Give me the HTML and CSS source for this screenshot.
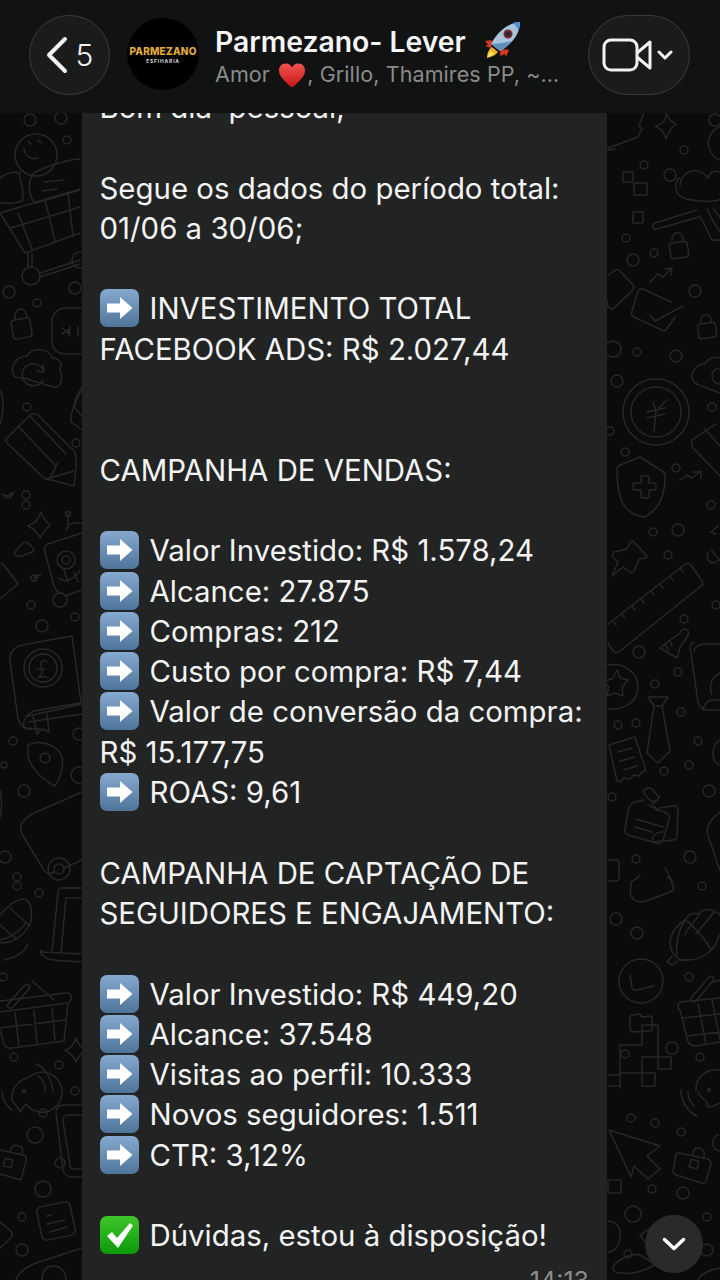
FILE: index.html
```html
<!DOCTYPE html>
<html lang="en">
<head>
  <meta charset="UTF-8">
  <meta name="viewport" content="width=device-width, initial-scale=1.0">
  <title>Parmezano- Lever</title>
  <link rel="stylesheet" href="styles.css">
</head>
<body>
  <svg width="0" height="0" class="defs">
    <defs>
      <linearGradient id="blue" x1="0" y1="0" x2="0" y2="1">
        <stop offset="0" stop-color="#86a9cf"/>
        <stop offset="1" stop-color="#4f7499"/>
      </linearGradient>
      <linearGradient id="green" x1="0" y1="0" x2="0" y2="1">
        <stop offset="0" stop-color="#3fc52a"/>
        <stop offset="1" stop-color="#0c9a0a"/>
      </linearGradient>
      <linearGradient id="red" x1="0" y1="0" x2="0" y2="1">
        <stop offset="0" stop-color="#f0564e"/>
        <stop offset="1" stop-color="#c8141a"/>
      </linearGradient>
      <symbol id="arrow" viewBox="0 0 39 38">
        <rect width="39" height="38" rx="7" fill="url(#blue)"/>
        <path d="M7 14.500h13V8l12.500 11L20 30v-6.500H7z" fill="#fff"/>
      </symbol>
      <symbol id="check" viewBox="0 0 39 38">
        <rect width="39" height="38" rx="7" fill="url(#green)"/>
        <path d="M7 20l5-4 5 6L30 7l3 2.500L18 32z" fill="#fff"/>
      </symbol>
    </defs>
  </svg>

  <div class="phone">
    <!-- doodles of the chat wallpaper -->
    <svg class="wallpaper" width="720" height="1280" viewBox="0 0 720 1280" fill="none" stroke="#272727" stroke-width="1.500" stroke-linecap="round" stroke-linejoin="round">
      <!-- dots, left side -->
      <circle cx="30" cy="120" r="6"/><circle cx="61" cy="118" r="6"/><circle cx="67" cy="140" r="4"/>
      <circle cx="9" cy="292" r="6"/><circle cx="37" cy="303" r="4"/><circle cx="75" cy="288" r="6"/>
      <circle cx="27" cy="407" r="4"/><circle cx="76" cy="443" r="4"/><circle cx="26" cy="495" r="4"/>
      <circle cx="26" cy="505" r="4"/><circle cx="31" cy="605" r="4"/><circle cx="42" cy="626" r="6"/>
      <circle cx="75" cy="617" r="4"/><circle cx="13" cy="741" r="4"/><circle cx="4" cy="765" r="3"/>
      <circle cx="24" cy="791" r="6"/><circle cx="5" cy="857" r="6"/><circle cx="17" cy="877" r="4"/>
      <circle cx="17" cy="886" r="4"/><circle cx="39" cy="893" r="4"/><circle cx="3" cy="977" r="4"/>
      <circle cx="14" cy="1057" r="4"/><circle cx="59" cy="1065" r="4"/><circle cx="75" cy="1091" r="4"/>
      <circle cx="43" cy="1113" r="4"/><circle cx="35" cy="1135" r="8"/><circle cx="43" cy="1189" r="8"/>
      <circle cx="22" cy="1217" r="4"/><circle cx="22" cy="1250" r="6"/>
      <!-- dots, right side -->
      <circle cx="644" cy="165" r="4"/><circle cx="670" cy="175" r="6"/><circle cx="684" cy="150" r="4"/>
      <circle cx="715" cy="120" r="6"/><circle cx="626" cy="238" r="4"/><circle cx="633" cy="260" r="6"/>
      <circle cx="654" cy="253" r="4"/><circle cx="695" cy="291" r="6"/><circle cx="613" cy="349" r="8"/>
      <circle cx="637" cy="352" r="4"/><circle cx="676" cy="356" r="6"/><circle cx="617" cy="381" r="6"/>
      <circle cx="712" cy="407" r="4"/><circle cx="625" cy="452" r="4"/><circle cx="676" cy="468" r="4"/>
      <circle cx="610" cy="431" r="4"/><circle cx="653" cy="532" r="4"/><circle cx="678" cy="530" r="6"/>
      <circle cx="668" cy="555" r="4"/><circle cx="711" cy="505" r="4"/><circle cx="684" cy="619" r="4"/>
      <circle cx="639" cy="652" r="6"/><circle cx="678" cy="672" r="4"/><circle cx="655" cy="684" r="4"/>
      <circle cx="681" cy="712" r="4"/><circle cx="618" cy="725" r="4"/><circle cx="636" cy="723" r="4"/>
      <circle cx="698" cy="741" r="4"/><circle cx="689" cy="765" r="4"/><circle cx="664" cy="771" r="4"/>
      <circle cx="612" cy="797" r="4"/><circle cx="709" cy="791" r="6"/><circle cx="636" cy="859" r="4"/>
      <circle cx="690" cy="857" r="6"/><circle cx="702" cy="886" r="4"/><circle cx="716" cy="605" r="4"/>
      <circle cx="616" cy="919" r="6"/><circle cx="637" cy="933" r="6"/><circle cx="689" cy="977" r="4"/>
      <circle cx="672" cy="1048" r="6"/><circle cx="625" cy="1054" r="4"/><circle cx="700" cy="1057" r="4"/>
      <circle cx="631" cy="1118" r="4"/><circle cx="655" cy="1123" r="4"/><circle cx="681" cy="1132" r="4"/>
      <circle cx="652" cy="1189" r="4"/><circle cx="683" cy="1193" r="6"/><circle cx="633" cy="1214" r="8"/>
      <circle cx="707" cy="1217" r="4"/><circle cx="628" cy="1254" r="4"/><circle cx="707" cy="1250" r="6"/>

      <!-- shopping cart + smile + heart, top left -->
      <circle cx="36" cy="155" r="21"/>
      <path d="M24 149c1 8 9 11 14 9M28 141l3 3M38 140l3 3"/>
      <path d="M0 203c8 0 12 2 22-2 4-12-4-22-2-28-6-2-14 0-20 5"/>
      <path d="M34 173c10-6 34-14 46-14M34 173c-7 8-6 24 2 30M80 190l-44 13"/>
      <path d="M44 182l20-2M42 191l15-2"/>
      <path d="M0 213l80-24M0 213l25 40 55-20M11 228l69-21M18 213l14 36M45 200l10 41M68 193l5 43"/>
      <path d="M28 253v14M32 253v14"/><circle cx="31" cy="276" r="9"/><path d="M40 273l40-13M40 277l40-13"/><circle cx="80" cy="260" r="8"/>
      <!-- lock and bubble -->
      <rect x="12" y="319" width="19" height="19" rx="3" transform="rotate(-10 21 328)"/><path d="M15 319c-1-13 11-13 12-2"/>
      <path d="M82 308H66c-8 0-14 6-14 14v20c0 7 6 12 14 12h16"/><path d="M62 328l8 6M70 326l-1 10M62 334l8-5M78 326v10"/>
      <!-- cloud -->
      <path d="M14 376c-5-10 3-20 13-20 5-9 22-8 25 2 10 0 10 8 8 12 3 8 2 18-7 17l-26-8c-6-1-11-1-13-3z"/><path d="M44 372a11 11 0 1 0-1 8M43 365l1 7-7-1"/>
      <path d="M82 386l-7 14 0 8 7 8"/>
      <!-- pencil -->
      <path d="M8 437l21-21c3-3 7-3 10 0l36 36c2 6 1 20-1 34l-30-8-36-34c-3-3-3-5 0-7z"/><path d="M18 426l38 40M30 416l36 38M46 479l28-8M58 462c-4 8-6 14-10 18"/>
      <path d="M0 390c4 8 4 22 0 34"/><path d="M82 390c-6 10-12 22-11 32l11 8"/>
      <path d="M2 494l8 4 4-6M4 498l10-6"/>
      <!-- star and triangle -->
      <path d="M41 512c-3 8-6 11-13 14 6 3 10 7 12 12 3-6 6-9 10-13-4-3-7-7-9-13z"/>
      <path d="M22 542c2-3 4-2 6-1l5 5c1 2 1 3-1 4l-10 4c-6 1-8-1-7-4z" transform="translate(0 2)"/>
      <path d="M0 563l4 2 14 19-18 15"/>
      <!-- robot -->
      <path d="M82 533l-34 11c-4 2-4 4-3 8l9 34c2 5 5 8 9 8h0M82 590l-17 6"/>
      <path d="M66 530c2-6 6-8 16-7M68 514v14"/><circle cx="68" cy="514" r="2.500"/>
      <circle cx="66" cy="560" r="9"/><circle cx="66" cy="560" r="4"/><circle cx="60" cy="600" r="7"/>
      <path d="M34 578l7-4M58 578c8 6 18 0 22-8M64 570l4 12M74 572l4 10"/><circle cx="34" cy="578" r="3"/>
      <!-- book with pound coin -->
      <path d="M72 636l-50 9c-8 2-13 8-12 16l8 58c3 8 7 11 14 10h8M72 636l9 66M80 703l-46 8c-6 2-12 10-10 15 1 2 3 3 7 2M28 716l54-12M28 722l54-8"/>
      <circle cx="43" cy="668" r="19"/><circle cx="43" cy="668" r="14"/><path d="M47 662c-3-3-7-1-6 3l1 8c-1 3-2 4-4 4h9M37 669h8"/>
      <path d="M33 716l4 18 5-5 7 3-2-18"/>
      <!-- map pin -->
      <path d="M28 745c12-6 30 0 34 12 2 10-2 22-7 29-12-6-25-18-27-30z"/><circle cx="45" cy="758" r="5"/>
      <path d="M0 790c3 12 1 24-1 32"/>
      <circle cx="79" cy="734" r="6"/><circle cx="79" cy="775" r="8"/>
      <!-- big tag -->
      <path d="M82 792l-50 22c-10 6-14 12-10 20l22 36c2 4 6 4 10 2M64 868l18-8"/>
      <circle cx="59" cy="869" r="11"/><circle cx="59" cy="869" r="5"/>
      <!-- corn, laptop -->
      <path d="M0 915c6-8 16-16 24-16 8 2 8 12 7 22-4 10-12 18-22 21-6 1-9 1-9 0M0 925l16 14M10 908l20 18M0 940c10-2 22-10 26-18M4 960c10-2 20-6 24-16"/>
      <path d="M82 888H62c-3 0-4 2-4 4l-6 60M82 898H66l-5 54M42 950c-2 0-2 4 0 5l6 4c10 2 22 2 34 3M42 952l40 2"/>
      <!-- basket -->
      <path d="M8 1004l16-18c4-3 7 0 5 3l-16 18c-3 3-7 0-5-3zM32 981l22 19"/>
      <path d="M0 1001l66-8c6-1 7 8 2 10L0 1012M68 1003l-4 38-52 7c-6 1-8-2-9-8l-3-10M0 1028l65-8M15 1013l4 33M34 1011l3 32M52 1008l3 32"/>
      <!-- star -->
      <path d="M76 1038c-2 8-6 11-11 12 5 3 9 6 11 12 2-5 5-9 10-12-5-2-8-6-10-12z"/>
      <!-- ringing bubble -->
      <path d="M24 1102a20 20 0 1 0 2-26 20 20 0 0 0-16 22c1 4 6 5 8 12z" transform="translate(2 2)"/><circle cx="24" cy="1091" r="1.500"/>
      <path d="M36 1064c10 4 16 16 17 28M38 1076c5 3 8 9 7 15M2 1092c1 8 4 14 10 18"/>
      <!-- briefcase -->
      <path d="M0 1150l23 5c3 1 4 3 3 6l-5 19-21-6M10 1152c1-6 4-8 9-6 4 1 4 4 3 9"/>
      <rect x="4" y="1159" width="8" height="8" transform="rotate(12 8 1163)"/>
      <!-- note -->
      <rect x="39" y="1204" width="34" height="34" rx="5" transform="rotate(-12 56 1221)"/><path d="M47 1216l4-1M47 1224l18-4M50 1232l17-5"/>
      <path d="M0 1222l10 8c3 3 3 6 0 9l-10 9"/>
      <path d="M82 1248l-46 15c-10 4-18 10-20 17M42 1280c0-8 4-14 11-14 8 0 13 6 13 14"/>
      <!-- laptop frame -->
      <path d="M82 1105H64c-6 0-8 4-8 8l7 56c1 6 4 8 10 8h9M82 1115H68c-4 0-5 3-5 6l7 44c0 3 1 4 4 4h8"/><circle cx="60" cy="1163" r="5"/>

      <!-- right side: squares, star -->
      <rect x="623" y="172" width="10" height="10"/><rect x="634" y="183" width="13" height="12"/><rect x="633" y="212" width="10" height="11"/>
      <path d="M666 113c0 8-3 11-11 13 6 2 9 6 11 13 2-7 5-11 10-15-5-2-8-6-10-11z"/>
      <path d="M608 148l30-11 4-8-3-3 5-14M608 150c3 0 4 0 7-1"/>
      <!-- lollipop pill -->
      <path d="M697 210l-42 13c-4 2-2 7 2 6l42-12"/>
      <path d="M680 178c-6 1-4 14-3 14 2 7 15 8 23 9s18 0 20-2M720 172c-6-2-10 0-12 6-10-14-28-6-28 8"/>
      <path d="M708 142a23 23 0 0 1 12-16M720 160c-8-2-12-12-12-18"/>
      <path d="M707 209l6 12 7 11M713 209l7 8M700 216l12 24M712 240h8"/>
      <!-- locks -->
      <rect x="670" y="242" width="18" height="16" rx="3" transform="rotate(-8 679 250)"/><path d="M672 240c-1-8 9-10 11-2l0 4"/>
      <rect x="698" y="323" width="18" height="15" rx="3" transform="rotate(-8 707 330)"/><path d="M701 322c-1-8 8-10 10-3l0 3"/>
      <path d="M650 282l8-8 5 3 9-9M665 269l7-1-1 7"/>
      <path d="M608 275l6-4c2-2 4-2 6 0l13 14c1 1 1 3 0 5l-20 19-5-2-1-6"/>
      <!-- checked envelope -->
      <path d="M671 302l-28-13c-3-1-4 0-5 2l-6 20c-1 3 0 5 2 6l28 13c3 1 5 0 6-3l7-10"/><path d="M650 315l5 6 28-15"/>
      <!-- heart, cloud, right edge -->
      <path d="M720 358c-6-2-12 0-15 6-5-1-13 5-13 12-1 4 4 9 10 10l18 7"/><circle cx="720" cy="376" r="8"/>
      <!-- yen coin -->
      <circle cx="656" cy="412" r="33"/><circle cx="656" cy="412" r="25"/><path d="M653 402l3 9 11-11M656 411l-2 20M647 412l18-4M647 418l18-4"/>
      <path d="M692 440l24-16M692 440c-1 4 0 6 1 8l27 28M704 428l16 18"/>
      <!-- shield with cross -->
      <path d="M640 457l-20 8c-2 1-3 2-3 5 0 12 2 26 6 34 5 8 13 12 22 13 10-6 20-15 20-40 0-3-1-5-3-6z"/><path d="M641 476h6c1 0 2 1 2 2v5h5c2 0 2 2 2 3v2c0 1-1 2-2 2h-5v6c0 1-1 2-2 2h-4c-1 0-2-1-2-2v-6h-6c-1 0-2-1-2-2v-2c0-2 1-3 2-3h6v-5c0-1 0-2 0-2z"/>
      <path d="M680 480l7-5 5 3 9-7M693 472h8v7"/>
      <!-- pin -->
      <path d="M633 541l13 14c1 1 1 2 0 3l-7 1-5 12c-1 2-3 2-4 1l-7-5-11 9 6-14-5-5c-1-2 0-4 1-5l13-3 3-6c1-1 2-2 3-2z"/>
      <path d="M718 526l-7 6 5 2"/><path d="M708 552c-2 6 0 10 5 11l7-3-9-10"/>
      <!-- ruler -->
      <path d="M608 624l76-59c3-2 5-2 7 0l11 16c1 2 1 4-1 5l-81 65c-3 2-5 2-7 0l-5-8"/>
      <path d="M613 621l3 4M622 614l3 4M632 606l3 4M641 599l3 4M651 591l3 4M660 584l3 4M670 576l3 4M680 568l3 4"/>
      <!-- eraser pen -->
      <path d="M679 634c2-5 6-6 8-4 2 1 2 4 0 7l-7 10-3 11-17-10 10-8zM665 644l3 6M670 640l2 6"/>
      <!-- star in circle -->
      <path d="M608 665c16-3 30 8 30 22s-14 24-30 22"/><path d="M622 670l3 8 8 2-6 7 1 9-8-3-8 3 2-9-6-6 9-2z" transform="translate(-5 0)"/>
      <!-- tie -->
      <path d="M648 697h20l-6 9 8 45-12 12-11-10 7-47z"/><path d="M654 706h8"/>
      <!-- receipt -->
      <path d="M608 745l26-8 11 34-4 1-3 4-5-1-4 4-6-1-4 4-3-1z" transform="translate(1 0)"/><path d="M618 752l14-4M620 761l15-4M623 770l14-4"/>
      <!-- pinned notes -->
      <path d="M650 800c-3-3-6-6-6-8 0-4 5-5 8-3l6 7c1 3-1 6-6 5zM654 806l3 5M660 796c-2 4-4 6-8 8"/>
      <path d="M644 800l-9 2c-3 1-5 3-6 6l-4 20c-1 3 0 5 3 7l28 8c3 1 6 0 7-3l6-20c1-3 0-6-3-7l-18-8"/>
      <path d="M660 808l13-2c3-1 5 1 5 4l-1 26c0 3-2 4-4 4l-21 2M636 819l27 8M635 827l17 5M652 842c0-6 4-10 11-10"/>
      <!-- frame at edge -->
      <path d="M608 860h8c2 0 3 1 3 3v14c0 3-1 4-3 4h-8"/>
      <path d="M720 812c-6 4-13 12-13 20l10 30 3 8"/><path d="M720 673c-8 4-12 12-8 22"/><path d="M694 643c-3 0-4 2-4 4l8 55c2 6 4 8 8 8h14M720 644h-16c-6 0-10 4-10 8"/><path d="M720 700h-8c-4 0-9 6-9 10"/>
      <path d="M720 740c-4 2-7 8-7 14s3 10 7 11"/>
      <!-- camera bag -->
      <path d="M640 875l-3 3c-3 3-7 3-6 6l-1 10 4 6c4 3 8 2 12 1l24-9c3-1 5-3 3-6l-2-6-4-3"/><path d="M665 868l8 15"/>
      <!-- corn -->
      <path d="M680 960c-6-4-10-10-10-18 1-10 8-18 15-22 3-5 8-8 14-6 3-5 12-6 16-2 4 0 8 6 6 10 2 4 0 12-3 16-2 10-14 22-30 22zM672 956l-5 6 5 3 6-4"/><path d="M685 920c-6 10-10 22-8 36M685 920c10 6 22 22 26 30M700 913c-4 8-14 16-15 22M714 912c-4 6-12 14-18 22"/>
      <!-- clock -->
      <circle cx="641" cy="981" r="22"/><path d="M630 974l2 14c1 2 3 3 5 2l17-4"/>
      <!-- folder -->
      <path d="M632 1015l8-1 2 3 8-1c1 0 2 1 2 3v10c0 2-1 2-3 2l-16 1c-2 0-3-1-3-3v-12c0-1 1-2 2-2z"/>
      <!-- basket, right -->
      <path d="M691 998l18-21c3-2 6 1 4 4l-17 20c-3 2-7-1-5-3zM720 980l-6 2"/>
      <path d="M680 1002l40-4M680 1002c-3 3-3 6 0 8l8 32c2 3 5 4 8 4l24-4M683 1018l37-4M688 1036l32-4M698 1004l8 40M712 1000l8 40"/>
      <!-- ringing bubble right -->
      <path d="M696 1090c-1-12 10-22 24-20M698 1092c2 4 4 7 8 9l2 6c4 0 8-2 12-4"/><circle cx="709" cy="1090" r="1.500"/>
      <path d="M681 1090c0 10 6 22 16 26M688 1092c0 6 2 10 6 14"/>
      <!-- pixel steps -->
      <path d="M608 1075h12v-30h22v-20h16v32h13v12h-13v-12h-16v16h13v13h-13v-13h-22v13h-12M620 1088v-13"/>
      <!-- cursor -->
      <path d="M609 1130l51 16-13 10 13 13-12 10-14-13-3 11z"/>
      <!-- briefcase right -->
      <path d="M679 1153l29 6c2 1 3 3 3 5l-5 17c-1 2-2 3-4 2l-26-8c-2-1-3-2-3-4l3-16c0-2 1-2 3-2zM693 1155c0-6 3-8 6-7 4 1 6 4 5 9"/>
      <rect x="690" y="1160" width="8" height="8" transform="rotate(14 694 1164)"/>
      <path d="M718 1135c-3 1-5 4-5 8 0 6 3 7 7 8"/>
      <rect x="608" y="1180" width="13" height="13"/>
      <path d="M608 1221c10 1 13 8 12 16-1 10-6 15-12 15"/>
      <!-- plane, under the scroll button -->
      <path d="M640 1235l22-14c3-4 8-6 14-5l16 10M640 1235l26 36-26-16c-10-2-20 4-26 10-3 6 1 8 8 8 12 2 26-4 36-10l12 4 4-8"/>
      <path d="M720 1268c-10 2-20 6-22 12"/>
    </svg>

    <header class="topbar">
      <button class="round-btn back-btn">
        <svg width="22" height="38" viewBox="0 0 22 38" fill="none" stroke="#f2f2f2" stroke-width="4" stroke-linecap="round" stroke-linejoin="round"><path d="M19 3L3 19l16 16"/></svg>
        <span class="back-count">5</span>
      </button>
      <div class="avatar">
        <span class="logo-name">PARMEZANO</span>
        <span class="logo-sub">ESFIHARIA</span>
      </div>
      <div class="chat-title">
        <div class="title-row">
          <span>Parmezano- Lever</span>
          <svg class="rocket" width="38" height="38" viewBox="0 0 38 38">
            <path d="M9 19L2 20l3 4-3 1 6 2zM18 28l-1 7 5-2 1 3 3-7z" fill="#d8391f"/>
            <path d="M9 26c-3 2-5 6-5 11 5-1 9-3 11-6z" fill="#f6b21b"/>
            <path d="M7 30c-1 2-2 4-2 6 3-1 5-2 6-4z" fill="#fbe36a"/>
            <path d="M8 23C14 11 25 2 37 1c0 12-8 22-20 29z" fill="#a9c4dc"/>
            <path d="M8 23l9 7c5-3 9-6 12-10-7 2-14 3-21 3z" fill="#5f8fc0"/>
            <path d="M30 1.500c2 0 5-.5 7-.5 0 3-.5 6-1.500 8z" fill="#4f93d8"/>
            <circle cx="25" cy="13" r="4.500" fill="#7a2a2c"/>
            <circle cx="25" cy="13" r="2.500" fill="#2c2a38"/>
          </svg>
        </div>
        <div class="members">Amor <svg class="heart" width="27" height="25" viewBox="0 0 27 25"><path d="M13.500 25C5 18 0 13 0 7c0-4 3-7 7-7 3 0 5 1.500 6.500 4C15 1.500 17 0 20 0c4 0 7 3 7 7 0 6-5 11-13.500 18z" fill="url(#red)"/></svg>, Grillo, Thamires PP, ~...</div>
      </div>
      <button class="round-btn video-btn">
        <svg width="50" height="34" viewBox="0 0 50 34" fill="none" stroke="#f2f2f2" stroke-width="3" stroke-linejoin="round"><rect x="2" y="2" width="33" height="30" rx="7"/><path d="M35 15l13-11v26L35 19"/></svg>
        <svg width="16" height="10" viewBox="0 0 16 10" fill="none" stroke="#f2f2f2" stroke-width="3" stroke-linecap="round" stroke-linejoin="round"><path d="M2 2l6 6 6-6"/></svg>
      </button>
    </header>

    <main class="chat">
      <div class="bubble">
        <div class="line">Bom dia  pessoal,</div>
        <div class="line"></div>
        <div class="line">Segue os dados do período total:</div>
        <div class="line">01/06 a 30/06;</div>
        <div class="line"></div>
        <div class="line"><svg class="emoji"><use href="#arrow"/></svg>INVESTIMENTO TOTAL</div>
        <div class="line">FACEBOOK ADS: R$ 2.027,44</div>
        <div class="line"></div>
        <div class="line"></div>
        <div class="line">CAMPANHA DE VENDAS:</div>
        <div class="line"></div>
        <div class="line"><svg class="emoji"><use href="#arrow"/></svg>Valor Investido: R$ 1.578,24</div>
        <div class="line"><svg class="emoji"><use href="#arrow"/></svg>Alcance: 27.875</div>
        <div class="line"><svg class="emoji"><use href="#arrow"/></svg>Compras: 212</div>
        <div class="line"><svg class="emoji"><use href="#arrow"/></svg>Custo por compra: R$ 7,44</div>
        <div class="line"><svg class="emoji"><use href="#arrow"/></svg>Valor de conversão da compra:</div>
        <div class="line">R$ 15.177,75</div>
        <div class="line"><svg class="emoji"><use href="#arrow"/></svg>ROAS: 9,61</div>
        <div class="line"></div>
        <div class="line">CAMPANHA DE CAPTAÇÃO DE</div>
        <div class="line">SEGUIDORES E ENGAJAMENTO:</div>
        <div class="line"></div>
        <div class="line"><svg class="emoji"><use href="#arrow"/></svg>Valor Investido: R$ 449,20</div>
        <div class="line"><svg class="emoji"><use href="#arrow"/></svg>Alcance: 37.548</div>
        <div class="line"><svg class="emoji"><use href="#arrow"/></svg>Visitas ao perfil: 10.333</div>
        <div class="line"><svg class="emoji"><use href="#arrow"/></svg>Novos seguidores: 1.511</div>
        <div class="line"><svg class="emoji"><use href="#arrow"/></svg>CTR: 3,12%</div>
        <div class="line"></div>
        <div class="line"><svg class="emoji"><use href="#check"/></svg>Dúvidas, estou à disposição!</div>
        <div class="time">14:13</div>
      </div>
    </main>

    <button class="scroll-btn">
      <svg width="24" height="14" viewBox="0 0 24 14" fill="none" stroke="#fff" stroke-width="3.500" stroke-linecap="round" stroke-linejoin="round"><path d="M2.500 2.500L12 11.500l9.500-9"/></svg>
    </button>
  </div>
</body>
</html>
```

FILE: styles.css
```css
* {
  box-sizing: border-box;
}
body {
  margin: 0;
  background: #0b0b0b;
  font-family: Inter, "Liberation Sans", sans-serif;
  color: #f4f4f4;
}
.defs {
  position: absolute;
}
.phone {
  position: relative;
  width: 720px;
  height: 1280px;
  overflow: hidden;
  display: flex;
  flex-direction: column;
  background: #0b0b0b;
}
.wallpaper {
  position: absolute;
  top: 0;
  left: 0;
}
button {
  font-family: inherit;
  color: inherit;
  padding: 0;
}

/* top bar */
.topbar {
  position: relative;
  z-index: 2;
  flex: none;
  height: 113px;
  padding: 15px 30px 0 29px;
  display: flex;
  align-items: flex-start;
  background: #111212;
}
.round-btn {
  height: 80px;
  border-radius: 40px;
  background: #1a1b1b;
  border: 1.5px solid #3b3b3b;
  display: flex;
  align-items: center;
  justify-content: center;
}
.back-btn {
  width: 81px;
  gap: 8px;
}
.back-count {
  font-size: 30px;
  font-weight: 300;
}
.avatar {
  flex: none;
  width: 72px;
  height: 72px;
  margin: 3px 0 0 17px;
  border-radius: 50%;
  background: #000;
  display: flex;
  flex-direction: column;
  align-items: center;
  justify-content: center;
  padding-top: 2px;
}
.logo-name {
  font-size: 10px;
  font-weight: 800;
  letter-spacing: .2px;
  color: #e2ab3c;
  line-height: 12px;
}
.logo-sub {
  font-size: 5px;
  font-weight: 700;
  letter-spacing: .8px;
  color: #d8d8d8;
  line-height: 8px;
}
.chat-title {
  flex: 1;
  margin-left: 16px;
  padding-top: 6px;
}
.title-row {
  display: flex;
  align-items: center;
  gap: 17px;
  font-size: 28.3px;
  font-weight: 600;
  line-height: 42px;
  color: #f6f6f6;
}
.rocket {
  margin-top: -4px;
}
.members {
  margin-top: -3px;
  font-size: 21.5px;
  letter-spacing: .1px;
  line-height: 28px;
  color: #8b8b8b;
  white-space: nowrap;
}
.heart {
  width: 26px;
  margin: 0 2px 0 3px;
  vertical-align: -6px;
}
.video-btn {
  flex: none;
  width: 102px;
  gap: 5px;
  padding-right: 3px;
}

/* message */
.chat {
  position: relative;
  z-index: 1;
  flex: 1;
  min-height: 0;
  padding-left: 82px;
}
.bubble {
  width: 525px;
  margin-top: -45px;
  padding: 20px 18px 0 17.5px;
  background: #222424;
}
.line {
  height: 40.3px;
  font-size: 29.4px;
  line-height: 40.3px;
  white-space: pre;
}
.emoji {
  width: 39px;
  height: 38px;
  margin-right: 11px;
  vertical-align: -8px;
}
.time {
  margin-top: 10px;
  text-align: right;
  font-size: 25px;
  line-height: 28px;
  color: #8b8d8d;
}

.scroll-btn {
  position: absolute;
  z-index: 3;
  left: 645px;
  top: 1215px;
  width: 58px;
  height: 58px;
  border: none;
  border-radius: 50%;
  background: #292b2b;
  display: flex;
  align-items: center;
  justify-content: center;
}
```
